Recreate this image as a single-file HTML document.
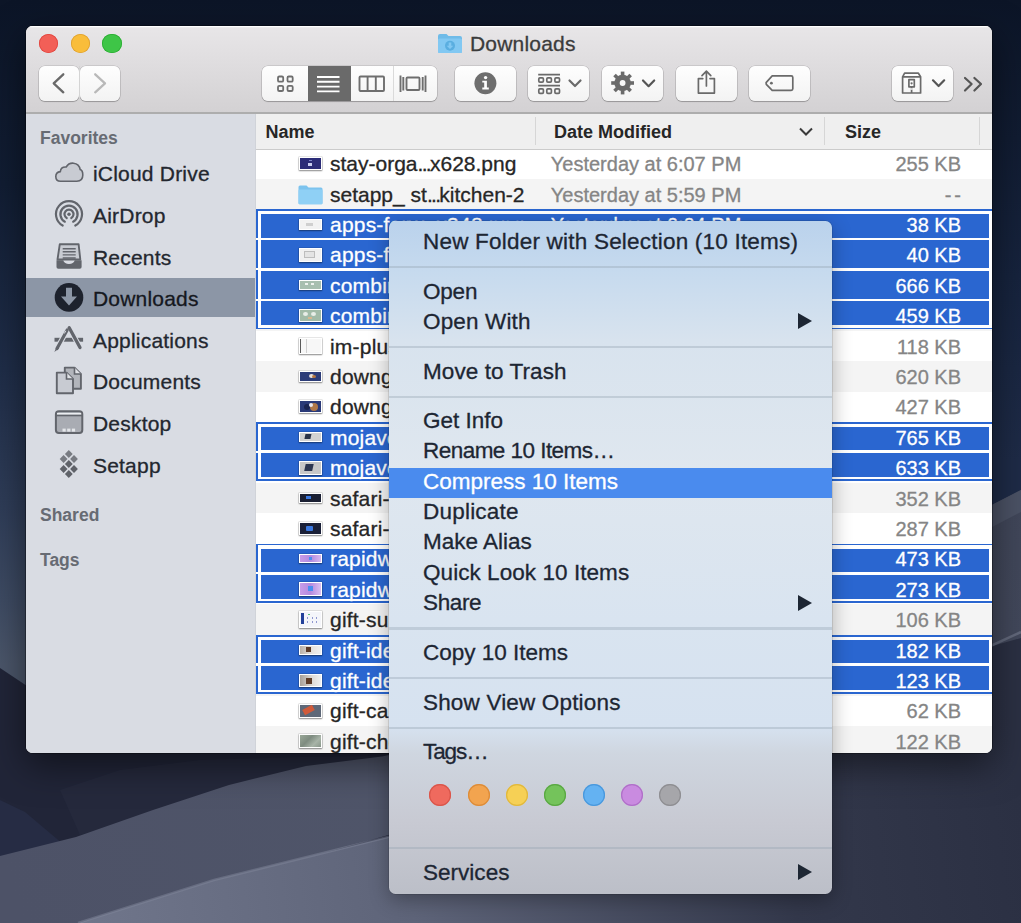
<!DOCTYPE html>
<html><head><meta charset="utf-8"><title>Finder</title>
<style>
*{box-sizing:border-box}
html,body{margin:0;padding:0}
body{width:1021px;height:923px;overflow:hidden;position:relative;background:#131b2d;font-family:"Liberation Sans",sans-serif;-webkit-text-stroke:0.3px currentColor}
.abs{position:absolute}
.t{position:absolute;white-space:nowrap;line-height:1}
.btn{position:absolute;top:66px;height:35px;border-radius:6px;background:linear-gradient(#fefefe,#f3f3f3);box-shadow:0 0 0 0.6px rgba(0,0,0,.18),0 1px 1px rgba(0,0,0,.22)}
.sb{position:absolute;left:93px;font-size:21px;letter-spacing:0.2px;color:#23272f;white-space:nowrap;line-height:1}
.sh{position:absolute;left:40px;font-size:17.5px;font-weight:bold;color:#676b73;-webkit-text-stroke:0;white-space:nowrap;line-height:1}
.nm{position:absolute;left:330px;font-size:21px;letter-spacing:0.2px;color:#262626;white-space:nowrap;line-height:1}
.dt{position:absolute;left:550.8px;font-size:20px;color:#858585;white-space:nowrap;line-height:1}
.sz{position:absolute;right:60px;font-size:20px;color:#858585;white-space:nowrap;line-height:1;text-align:right}
.sel .nm,.sel .dt,.sel .sz{color:#fff}
.mi{position:absolute;left:423px;font-size:22.5px;color:#1d2633;white-space:nowrap;line-height:1}
.sep{position:absolute;left:389px;width:443px;height:2.2px;background:rgba(150,165,180,.38)}
.arr{position:absolute;left:798px;width:0;height:0;border-top:8px solid transparent;border-bottom:8px solid transparent;border-left:14px solid #1d2633}
.tag{position:absolute;top:784px;width:22px;height:22px;border-radius:50%}
</style></head><body>

<svg class="abs" style="left:0;top:0" width="1021" height="923" viewBox="0 0 1021 923">
<defs>
<linearGradient id="sky" x1="0" y1="0" x2="0" y2="923" gradientUnits="userSpaceOnUse"><stop offset="0" stop-color="#0c1527"/><stop offset="0.2" stop-color="#111d33"/><stop offset="0.4" stop-color="#1f2d48"/><stop offset="0.55" stop-color="#2f3d58"/><stop offset="0.65" stop-color="#3e4b63"/><stop offset="0.72" stop-color="#4b566a"/><stop offset="1" stop-color="#4b566a"/></linearGradient>
<linearGradient id="d1" x1="0" y1="857" x2="1021" y2="470" gradientUnits="userSpaceOnUse"><stop offset="0" stop-color="#4d5267"/><stop offset="0.5" stop-color="#50566a"/><stop offset="1" stop-color="#404659"/></linearGradient>
<linearGradient id="d2" x1="80" y1="923" x2="1021" y2="800" gradientUnits="userSpaceOnUse"><stop offset="0" stop-color="#70768b"/><stop offset="0.35" stop-color="#5e6479"/><stop offset="0.75" stop-color="#33384b"/><stop offset="1" stop-color="#2b3043"/></linearGradient>
<linearGradient id="rs" x1="0" y1="0" x2="0" y2="923" gradientUnits="userSpaceOnUse"><stop offset="0" stop-color="#0c1527"/><stop offset="0.3" stop-color="#16233d"/><stop offset="0.5" stop-color="#1e2b47"/><stop offset="1" stop-color="#1e2b47"/></linearGradient>
</defs>
<rect width="1021" height="923" fill="url(#sky)"/>
<rect x="60" width="961" height="923" fill="url(#rs)"/>
<path d="M0 668 L30 688 L90 710 L200 735 L320 748 L450 740 L600 720 L800 700 L1021 680 L1021 923 L0 923 Z" fill="#212538"/>
<path d="M0 800 L25 812 L70 850 L0 872 Z" fill="#262c44"/><path d="M60 790 L120 770 L200 760 L300 757 L389 756 L389 765 L250 790 L150 815 L80 835 Z" fill="#2b2f42" opacity="0.45"/>
<path d="M0 856 L76 837 L153 810 L229 785 L306 766 L382 756.5 L450 742 L550 705 L700 640 L850 578 L1021 490 L1021 640 L700 740 L392 834 L78 923 L0 923 Z" fill="url(#d1)"/>
<path d="M78 923 L214 880 L392 836 L600 770 L800 700 L1021 638 L1021 923 Z" fill="url(#d2)"/>
<path d="M78 923 L214 880 L392 836 L600 770" fill="none" stroke="#80869a" stroke-width="2.5" opacity="0.5"/>
<path d="M900 552 L1021 490 L1021 512 L900 575 Z" fill="#4b5265"/><path d="M960 660 L1021 632" stroke="#6a7083" stroke-width="2.5" opacity="0.8"/>
</svg>

<div class="abs" style="left:26px;top:26px;width:966px;height:727px;border-radius:6.5px;box-shadow:0 12px 36px rgba(0,0,0,.5),0 0 0 0.6px rgba(0,0,0,.55)"></div>
<div class="abs" style="left:26px;top:26px;width:966px;height:727px;border-radius:6.5px;overflow:hidden;background:#fff"><div class="abs" style="left:-26px;top:-26px;width:1021px;height:923px">
<div class="abs" style="left:26px;top:26px;width:966px;height:87px;background:linear-gradient(#e8e6e8,#d3d1d3);box-shadow:inset 0 1.2px 0 rgba(255,255,255,.95)"></div>
<div class="abs" style="left:26px;top:113px;width:230px;height:640px;background:#d9dce3"></div>
<div class="abs" style="left:254.5px;top:113px;width:1.5px;height:640px;background:#d0d3d9"></div>
<div class="abs" style="left:38.7px;top:33.6px;width:19.2px;height:19.2px;border-radius:50%;background:#f25f57;box-shadow:inset 0 0 0 0.8px #e0443e"></div>
<div class="abs" style="left:70.7px;top:33.6px;width:19.2px;height:19.2px;border-radius:50%;background:#f9bd3a;box-shadow:inset 0 0 0 0.8px #dea030"></div>
<div class="abs" style="left:102.4px;top:33.6px;width:19.2px;height:19.2px;border-radius:50%;background:#3ec547;box-shadow:inset 0 0 0 0.8px #2aac32"></div>
<svg class="abs" style="left:437px;top:33px" width="26" height="21" viewBox="0 0 26 21"><path d="M1 3 Q1 1 3 1 H9.5 L11.5 3 H23 Q25 3 25 5 V18.5 Q25 20 23.5 20 H2.5 Q1 20 1 18.5 Z" fill="#6fbbe8"/><rect x="1" y="5.5" width="24" height="14.5" rx="1.5" fill="#82c8f2"/><circle cx="13" cy="12.7" r="5" fill="#5aaee0"/><path d="M11.7 9.5 h2.6 v3.3 h2 l-3.3 3.3 l-3.3 -3.3 h2 z" fill="#82c8f2"/></svg>
<div class="t" style="left:470px;top:33px;font-size:21px;letter-spacing:0.2px;color:#3b3b3b">Downloads</div>
<div class="btn" style="left:39px;width:40px"></div>
<div class="btn" style="left:80px;width:40px"></div>
<svg class="abs" style="left:39px;top:66px" width="81" height="35"><path d="M24.3 8.3 L14.7 17.3 L24.3 26.3" fill="none" stroke="#6a6a6a" stroke-width="2.3" stroke-linecap="round" stroke-linejoin="round"/><path d="M56.2 8.3 L66 17.3 L56.2 26.3" fill="none" stroke="#b9b9b9" stroke-width="2.3" stroke-linecap="round" stroke-linejoin="round"/></svg>
<div class="abs" style="left:79px;top:66px;width:1px;height:35px;background:#d4d4d4"></div>
<div class="btn" style="left:262px;width:175px"></div>
<div class="abs" style="left:307.5px;top:66px;width:43px;height:35px;background:#6a6a6a"></div>
<div class="abs" style="left:392.5px;top:66px;width:1px;height:35px;background:#dadada"></div>
<svg class="abs" style="left:262px;top:66px" width="175" height="35" viewBox="0 0 175 35">
<g fill="none" stroke="#6e6e6e" stroke-width="1.8">
<rect x="16" y="10.5" width="5.2" height="5.2" rx="1.3"/><rect x="25.5" y="10.5" width="5.2" height="5.2" rx="1.3"/>
<rect x="16" y="19.8" width="5.2" height="5.2" rx="1.3"/><rect x="25.5" y="19.8" width="5.2" height="5.2" rx="1.3"/>
</g>
<g stroke="#fff" stroke-width="1.9"><path d="M55 11 H77.5 M55 15.8 H77.5 M55 20.6 H77.5 M55 25.4 H77.5"/></g>
<g fill="none" stroke="#6e6e6e" stroke-width="1.9"><rect x="97.5" y="10.5" width="24.5" height="14.5" rx="1"/><path d="M105.6 10.5 V25 M113.8 10.5 V25"/></g>
<g fill="none" stroke="#6e6e6e" stroke-width="1.9"><rect x="144.5" y="11.5" width="13" height="12.5" rx="1"/><path d="M138.5 9.5 V26 M141.3 11 V24.5 M160.7 11 V24.5 M163.5 9.5 V26"/></g>
</svg>
<div class="btn" style="left:454.5px;width:61px"></div>
<svg class="abs" style="left:454.5px;top:66px" width="61" height="35"><circle cx="30.4" cy="17.2" r="11" fill="#6e6e6e"/><circle cx="30.6" cy="11.6" r="1.7" fill="#fff"/><path d="M27.3 14.8 H31.9 V21.6 H33.8 V23.4 H27.3 V21.6 H29.2 V16.6 H27.3 Z" fill="#fff"/></svg>
<div class="btn" style="left:528px;width:61px"></div>
<svg class="abs" style="left:528px;top:66px" width="61" height="35"><g fill="none" stroke="#6a6a6a"><path d="M10.2 8.6 H32 M10.2 19.6 H32" stroke-width="1.7"/>
<rect x="10.8" y="11.8" width="4.6" height="4.4" rx="1.1" stroke-width="1.7"/><rect x="18.8" y="11.8" width="4.6" height="4.4" rx="1.1" stroke-width="1.7"/><rect x="26.9" y="11.8" width="4.6" height="4.4" rx="1.1" stroke-width="1.7"/>
<rect x="10.8" y="22.9" width="4.6" height="4.4" rx="1.1" stroke-width="1.7"/><rect x="18.8" y="22.9" width="4.6" height="4.4" rx="1.1" stroke-width="1.7"/><rect x="26.9" y="22.9" width="4.6" height="4.4" rx="1.1" stroke-width="1.7"/>
<path d="M41.5 14.5 L47 20 L52.5 14.5" stroke-width="2.2" stroke-linecap="round" stroke-linejoin="round"/></g></svg>
<div class="btn" style="left:602px;width:61px"></div>
<svg class="abs" style="left:602px;top:66px" width="61" height="35"><g fill="#6a6a6a"><circle cx="20.6" cy="17" r="8.3"/><rect x="18.8" y="5.6" width="3.6" height="6" transform="rotate(0 20.6 17)"/><rect x="18.8" y="5.6" width="3.6" height="6" transform="rotate(45 20.6 17)"/><rect x="18.8" y="5.6" width="3.6" height="6" transform="rotate(90 20.6 17)"/><rect x="18.8" y="5.6" width="3.6" height="6" transform="rotate(135 20.6 17)"/><rect x="18.8" y="5.6" width="3.6" height="6" transform="rotate(180 20.6 17)"/><rect x="18.8" y="5.6" width="3.6" height="6" transform="rotate(225 20.6 17)"/><rect x="18.8" y="5.6" width="3.6" height="6" transform="rotate(270 20.6 17)"/><rect x="18.8" y="5.6" width="3.6" height="6" transform="rotate(315 20.6 17)"/></g><circle cx="20.6" cy="17" r="2.9" fill="#f8f8f8"/><path d="M41 14.5 L46.6 20.2 L52.2 14.5" fill="none" stroke="#555" stroke-width="2.2" stroke-linecap="round" stroke-linejoin="round"/></svg>
<div class="btn" style="left:675.5px;width:61px"></div>
<svg class="abs" style="left:675.5px;top:66px" width="61" height="35"><g fill="none" stroke="#6a6a6a" stroke-width="1.7" stroke-linejoin="round" stroke-linecap="round"><path d="M26.8 12.6 H22.4 V27.1 H38.4 V12.6 H34"/><path d="M30.4 20 V5.2 M26 9.6 L30.4 5.2 L34.8 9.6"/></g></svg>
<div class="btn" style="left:749px;width:61px"></div>
<svg class="abs" style="left:749px;top:66px" width="61" height="35"><path d="M17.2 17.6 Q16.8 16.9 17.3 16.3 L23.2 9.9 H42.2 Q43.8 9.9 43.8 11.5 V22.8 Q43.8 24.4 42.2 24.4 H23.2 L17.3 18.3 Z" fill="none" stroke="#6a6a6a" stroke-width="1.7" stroke-linejoin="round"/><circle cx="22.4" cy="17.2" r="1.4" fill="#6a6a6a"/></svg>
<div class="btn" style="left:891.5px;width:61px"></div>
<svg class="abs" style="left:891.5px;top:66px" width="61" height="35"><g fill="none" stroke="#6a6a6a" stroke-width="1.7" stroke-linejoin="round"><path d="M10.6 10.8 L12.6 7.2 H26.4 L28.6 10.8 V27 H10.6 Z M10.6 10.8 H28.6"/><rect x="16.9" y="13.6" width="5.4" height="7.2"/><path d="M19.6 21 V27"/></g><circle cx="19.6" cy="17.3" r="1.1" fill="#6a6a6a"/><path d="M18.4 23 H20.8" stroke="#f4f4f4" stroke-width="1.4"/><path d="M41 14.3 L46.6 20 L52.2 14.3" fill="none" stroke="#555" stroke-width="2.2" stroke-linecap="round" stroke-linejoin="round"/></svg>
<svg class="abs" style="left:962px;top:74px" width="22" height="20"><g fill="none" stroke="#555" stroke-width="2.2" stroke-linecap="round" stroke-linejoin="round"><path d="M3 4 L9.6 10 L3 16.5 M12.4 4 L19 10 L12.4 16.5"/></g></svg>
<div class="sh" style="top:129.6px">Favorites</div>
<div class="abs" style="left:26px;top:278.2px;width:228.8px;height:38.4px;background:#8c96a6"></div>
<div class="sb" style="top:163.4px;">iCloud Drive</div>
<div class="sb" style="top:205.0px;">AirDrop</div>
<div class="sb" style="top:246.6px;">Recents</div>
<div class="sb" style="top:288.2px;color:#15181e">Downloads</div>
<div class="sb" style="top:329.8px;">Applications</div>
<div class="sb" style="top:371.4px;">Documents</div>
<div class="sb" style="top:413.0px;">Desktop</div>
<div class="sb" style="top:454.6px;">Setapp</div>
<div class="sh" style="top:507.2px">Shared</div>
<div class="sh" style="top:552.3px">Tags</div>
<svg class="abs" style="left:0;top:0" width="256" height="500" viewBox="0 0 256 500">
<path d="M60.5 181.2 Q55.8 181.2 55.8 176.5 Q55.8 172.2 60.3 171.6 Q60.8 166.6 66.2 167 Q68.6 162.8 73.5 163.2 Q79.2 163.7 80.2 169.6 Q82.8 170.5 82.8 175 Q82.8 181.2 76.8 181.2 Z" fill="#c8cbd2" stroke="#62656c" stroke-width="1.6"/>
<path d="M62.70 225.57 A13 13 0 1 1 75.30 225.57 M64.83 221.72 A8.6 8.6 0 1 1 73.17 221.72 M66.68 218.06 A4.5 4.5 0 1 1 71.32 218.06" fill="none" stroke="#62656c" stroke-width="2.2" stroke-linecap="round"/>
<circle cx="69" cy="214.2" r="1.7" fill="#62656c"/>
<path d="M59.8 244.2 H78.6 L80.3 259.5 H57.5 Z" fill="#c8cbd2" stroke="#62656c" stroke-width="1.9" stroke-linejoin="round"/>
<path d="M62.7 248.7 H75.7 M62.7 251.8 H75.7 M62.7 254.9 H75.7 M62.7 258 H75.7" stroke="#62656c" stroke-width="1.4"/>
<path d="M56.5 260.2 H63.2 Q64.5 264 69 264 Q73.5 264 74.8 260.2 H81.6 V267 Q81.6 268.8 79.8 268.8 H58.3 Q56.5 268.8 56.5 267 Z" fill="#62656c"/>
<circle cx="69" cy="297.4" r="14.3" fill="#1d222d"/>
<path d="M66 287.8 H72 V296.5 H77 L69 305.5 L61 296.5 H66 Z" fill="#8c96a6"/>
<path d="M54.5 337.8 H83.1 V341.7 H54.5 Z" fill="#62656c"/>
<path d="M67.2 330 L57 348.5 M69.2 327.8 L80 347.5" stroke="#d9dce3" stroke-width="5.4" stroke-linecap="round"/>
<path d="M67.2 330 L57 348.5" stroke="#62656c" stroke-width="3.2" stroke-linecap="round"/>
<path d="M56.6 346.8 L54.3 352 L59.2 348.3 Z" fill="#62656c"/>
<path d="M69.2 327.8 L80 347.5" stroke="#62656c" stroke-width="3.3" stroke-linecap="round"/>
<path d="M64.3 333.5 L65.8 330.8" stroke="#d9dce3" stroke-width="1"/>
<path d="M64.8 367.6 H74.5 L80.9 374 V388.8 H64.8 Z" fill="#b2b5bb" stroke="#62656c" stroke-width="1.9" stroke-linejoin="round"/>
<path d="M74.5 367.6 V374 H80.9" fill="#dfe1e5" stroke="#62656c" stroke-width="1.6"/>
<path d="M56.8 372.6 H66.5 L73 379 V393.2 H56.8 Z" fill="#c8cbd2" stroke="#62656c" stroke-width="1.9" stroke-linejoin="round"/>
<path d="M66.5 372.6 V379 H73" fill="#dfe1e5" stroke="#62656c" stroke-width="1.6"/>
<rect x="55.9" y="411.2" width="26.4" height="21.8" rx="3" fill="#a9acb3" stroke="#62656c" stroke-width="2"/>
<path d="M57 413.6 H81.2" stroke="#eceef1" stroke-width="1.5"/>
<path d="M56 415.6 H82.2" stroke="#62656c" stroke-width="1.4"/>
<rect x="62.5" y="428.6" width="3.2" height="3" fill="#e3e5e9"/><rect x="67.2" y="428.6" width="3.2" height="3" fill="#e3e5e9"/><rect x="71.9" y="428.6" width="3.2" height="3" fill="#e3e5e9"/>
<g fill="#787b82"><path d="M68.8 450.1 L72.7 454 L68.8 457.9 L64.89999999999999 454 Z"/><path d="M63.6 455.1 L67.5 459 L63.6 462.9 L59.7 459 Z"/><path d="M74 455.1 L77.9 459 L74 462.9 L70.1 459 Z"/></g>
<g fill="#5f6269"><path d="M68.8 460.1 L72.7 464 L68.8 467.9 L64.89999999999999 464 Z"/><path d="M63.6 465.1 L67.5 469 L63.6 472.9 L59.7 469 Z"/><path d="M74 465.1 L77.9 469 L74 472.9 L70.1 469 Z"/><path d="M68.8 470.1 L72.7 474 L68.8 477.9 L64.89999999999999 474 Z"/></g>
</svg>
<div class="abs" style="left:256px;top:113px;width:736px;height:37.1px;background:#efefef;border-bottom:1.3px solid #cbcbcb"></div>
<div class="abs" style="left:26px;top:112px;width:966px;height:1.7px;background:#adadad"></div>
<div class="abs" style="left:534.8px;top:117px;width:1px;height:28px;background:#d6d6d6"></div>
<div class="abs" style="left:824.4px;top:117px;width:1px;height:28px;background:#d6d6d6"></div>
<div class="abs" style="left:979.3px;top:117px;width:1px;height:28px;background:#d6d6d6"></div>
<div class="t" style="left:265.5px;top:122.6px;font-size:18px;font-weight:bold;color:#262626;-webkit-text-stroke:0">Name</div>
<div class="t" style="left:554px;top:122.6px;font-size:18px;font-weight:bold;color:#262626;-webkit-text-stroke:0">Date Modified</div>
<div class="t" style="left:845px;top:122.6px;font-size:18px;font-weight:bold;color:#262626;-webkit-text-stroke:0">Size</div>
<svg class="abs" style="left:798px;top:126px" width="16" height="12"><path d="M2 2.5 L8 8.5 L14 2.5" fill="none" stroke="#3a3a3a" stroke-width="2"/></svg>
<div class="abs" style="left:256px;top:150.1px;width:736px;height:29.2px;background:#ffffff"></div>
<div class="abs" style="left:256px;top:178.8px;width:736px;height:30.9px;background:#f4f4f4"></div>
<div class="abs" style="left:256px;top:209.2px;width:736px;height:30.9px;background:#ffffff"></div>
<div class="abs" style="left:256px;top:239.6px;width:736px;height:30.9px;background:#f4f4f4"></div>
<div class="abs" style="left:256px;top:270.0px;width:736px;height:30.9px;background:#ffffff"></div>
<div class="abs" style="left:256px;top:300.4px;width:736px;height:30.9px;background:#f4f4f4"></div>
<div class="abs" style="left:256px;top:330.8px;width:736px;height:30.9px;background:#ffffff"></div>
<div class="abs" style="left:256px;top:361.2px;width:736px;height:30.9px;background:#f4f4f4"></div>
<div class="abs" style="left:256px;top:391.6px;width:736px;height:30.9px;background:#ffffff"></div>
<div class="abs" style="left:256px;top:422.0px;width:736px;height:30.9px;background:#f4f4f4"></div>
<div class="abs" style="left:256px;top:452.4px;width:736px;height:30.9px;background:#ffffff"></div>
<div class="abs" style="left:256px;top:482.8px;width:736px;height:30.9px;background:#f4f4f4"></div>
<div class="abs" style="left:256px;top:513.2px;width:736px;height:30.9px;background:#ffffff"></div>
<div class="abs" style="left:256px;top:543.6px;width:736px;height:30.9px;background:#f4f4f4"></div>
<div class="abs" style="left:256px;top:574.0px;width:736px;height:30.9px;background:#ffffff"></div>
<div class="abs" style="left:256px;top:604.4px;width:736px;height:30.9px;background:#f4f4f4"></div>
<div class="abs" style="left:256px;top:634.8px;width:736px;height:30.9px;background:#ffffff"></div>
<div class="abs" style="left:256px;top:665.2px;width:736px;height:30.9px;background:#f4f4f4"></div>
<div class="abs" style="left:256px;top:695.6px;width:736px;height:30.9px;background:#ffffff"></div>
<div class="abs" style="left:256px;top:726.0px;width:736px;height:30.9px;background:#f4f4f4"></div>
<div class="abs" style="left:256px;top:209.2px;width:736px;height:120.1px;background:#2a66d0"></div>
<div class="abs" style="left:258px;top:211.0px;width:734px;height:116.5px;background:#fff"></div>
<div class="abs" style="left:261px;top:214.4px;width:728px;height:23.3px;background:#2a66d0"></div>
<div class="abs" style="left:261px;top:240.1px;width:728px;height:28.0px;background:#2a66d0"></div>
<div class="abs" style="left:256px;top:237.7px;width:6px;height:2.4px;background:#fff"></div>
<div class="abs" style="left:261px;top:270.5px;width:728px;height:28.0px;background:#2a66d0"></div>
<div class="abs" style="left:256px;top:268.1px;width:6px;height:2.4px;background:#fff"></div>
<div class="abs" style="left:261px;top:300.9px;width:728px;height:24.0px;background:#2a66d0"></div>
<div class="abs" style="left:256px;top:298.5px;width:6px;height:2.4px;background:#fff"></div>
<div class="abs" style="left:256px;top:422.0px;width:736px;height:59.3px;background:#2a66d0"></div>
<div class="abs" style="left:258px;top:423.8px;width:734px;height:55.7px;background:#fff"></div>
<div class="abs" style="left:261px;top:427.2px;width:728px;height:23.3px;background:#2a66d0"></div>
<div class="abs" style="left:261px;top:452.9px;width:728px;height:24.0px;background:#2a66d0"></div>
<div class="abs" style="left:256px;top:450.5px;width:6px;height:2.4px;background:#fff"></div>
<div class="abs" style="left:256px;top:543.6px;width:736px;height:59.3px;background:#2a66d0"></div>
<div class="abs" style="left:258px;top:545.4px;width:734px;height:55.7px;background:#fff"></div>
<div class="abs" style="left:261px;top:548.8px;width:728px;height:23.3px;background:#2a66d0"></div>
<div class="abs" style="left:261px;top:574.5px;width:728px;height:24.0px;background:#2a66d0"></div>
<div class="abs" style="left:256px;top:572.1px;width:6px;height:2.4px;background:#fff"></div>
<div class="abs" style="left:256px;top:634.8px;width:736px;height:59.3px;background:#2a66d0"></div>
<div class="abs" style="left:258px;top:636.6px;width:734px;height:55.7px;background:#fff"></div>
<div class="abs" style="left:261px;top:640.0px;width:728px;height:23.3px;background:#2a66d0"></div>
<div class="abs" style="left:261px;top:665.7px;width:728px;height:24.0px;background:#2a66d0"></div>
<div class="abs" style="left:256px;top:663.3px;width:6px;height:2.4px;background:#fff"></div>
<div style="position:absolute;left:298.5px;top:156.8px;width:23px;height:13.7px;border:1.5px solid #fff;background:#2b2c78;box-shadow:0 0 0 0.5px rgba(0,0,0,.18),0 1px 1.5px rgba(0,0,0,.4);overflow:hidden"><div style="position:absolute;left:8px;top:5.5px;width:4.5px;height:2.6px;background:#c8cdf0"></div><div style="position:absolute;left:9px;top:2.5px;width:3px;height:1px;background:#7c84c8"></div></div>
<div class="nm" style="top:153.2px;letter-spacing:0;">stay-orga<span style="letter-spacing:-1.7px">...</span>x628.png</div>
<div class="dt" style="top:154.2px;">Yesterday at 6:07 PM</div>
<div class="sz" style="top:154.2px;right:60px;">255 KB</div>
<svg style="position:absolute;left:298px;top:184.5px" width="25" height="20" viewBox="0 0 25 20"><path d="M0.5 2 Q0.5 0.5 2 0.5 H8.5 L10.5 2.5 H23 Q24.5 2.5 24.5 4 V18 Q24.5 19.2 23.3 19.2 H1.7 Q0.5 19.2 0.5 18 Z" fill="#7cc3ee"/><rect x="0.5" y="4.6" width="24" height="14.6" rx="1.2" fill="#8fd0f5"/></svg>
<div class="nm" style="top:183.6px;letter-spacing:0;">setapp_ st<span style="letter-spacing:-1.7px">...</span>kitchen-2</div>
<div class="dt" style="top:184.6px;">Yesterday at 5:59 PM</div>
<div class="sz" style="top:184.6px;right:60px;letter-spacing:3px;margin-right:-3px">--</div>
<div style="position:absolute;left:298.5px;top:219.0px;width:23px;height:10.8px;border:1.5px solid #fff;background:#f2f2f2;box-shadow:0 0 0 0.5px rgba(0,0,0,.18),0 1px 1.5px rgba(0,0,0,.4);overflow:hidden"><div style="position:absolute;left:6.5px;top:2.5px;width:7px;height:3.5px;background:#cfcfcf"></div></div>
<div class="nm" style="top:214.0px;color:#fff;">apps-forw<span style="letter-spacing:-1.7px">...</span>x348.png</div>
<div class="dt" style="top:215.0px;color:#fff">Yesterday at 6:04 PM</div>
<div class="sz" style="top:215.0px;right:60px;color:#fff">38 KB</div>
<div style="position:absolute;left:298.5px;top:247.8px;width:23px;height:14.0px;border:1.5px solid #fff;background:#f0f0f0;box-shadow:0 0 0 0.5px rgba(0,0,0,.18),0 1px 1.5px rgba(0,0,0,.4);overflow:hidden"><div style="position:absolute;left:4.5px;top:2px;width:11px;height:7px;border:1px solid #bdbdbd;background:#e4e4e4"></div></div>
<div class="nm" style="top:244.4px;color:#fff;">apps-fo<span style="letter-spacing:-1.7px">...</span>x348.png</div>
<div class="dt" style="top:245.4px;color:#fff">Yesterday at 6:04 PM</div>
<div class="sz" style="top:245.4px;right:60px;color:#fff">40 KB</div>
<div style="position:absolute;left:298.5px;top:279.9px;width:23px;height:10.5px;border:1.5px solid #fff;background:#a8bfb0;box-shadow:0 0 0 0.5px rgba(0,0,0,.18),0 1px 1.5px rgba(0,0,0,.4);overflow:hidden"><div style="position:absolute;left:5px;top:2.5px;width:3px;height:2px;background:#eef2ee"></div><div style="position:absolute;left:11px;top:2.5px;width:3px;height:2px;background:#eef2ee"></div></div>
<div class="nm" style="top:274.8px;color:#fff;">combined<span style="letter-spacing:-1.7px">...</span>x628.png</div>
<div class="dt" style="top:275.8px;color:#fff">Yesterday at 6:01 PM</div>
<div class="sz" style="top:275.8px;right:60px;color:#fff">666 KB</div>
<div style="position:absolute;left:298.5px;top:309.1px;width:23px;height:12.9px;border:1.5px solid #fff;background:#a2bba8;box-shadow:0 0 0 0.5px rgba(0,0,0,.18),0 1px 1.5px rgba(0,0,0,.4);overflow:hidden"><div style="position:absolute;left:3px;top:2px;width:5px;height:4px;border-radius:50%;background:#e8eee8"></div><div style="position:absolute;left:11.5px;top:2px;width:5px;height:4px;border-radius:50%;background:#e8eee8"></div><div style="position:absolute;left:8px;top:7px;width:4px;height:2px;background:#d8b890"></div></div>
<div class="nm" style="top:305.2px;color:#fff;">combined<span style="letter-spacing:-1.7px">...</span>x348.png</div>
<div class="dt" style="top:306.2px;color:#fff">Yesterday at 6:01 PM</div>
<div class="sz" style="top:306.2px;right:60px;color:#fff">459 KB</div>
<div style="position:absolute;left:298.5px;top:337.8px;width:23px;height:16.3px;border:1.5px solid #fff;background:#f7f7f7;box-shadow:0 0 0 0.5px rgba(0,0,0,.18),0 1px 1.5px rgba(0,0,0,.4);overflow:hidden"><div style="position:absolute;left:0;top:0;width:1.5px;height:100%;background:#5a5a5a"></div><div style="position:absolute;left:6px;top:0;width:1px;height:100%;background:#d0d0d0"></div></div>
<div class="nm" style="top:335.6px;">im-plus<span style="letter-spacing:-1.7px">...</span>x628.png</div>
<div class="dt" style="top:336.6px;">Yesterday at 5:58 PM</div>
<div class="sz" style="top:336.6px;right:60px;">118 KB</div>
<div style="position:absolute;left:298.5px;top:371.2px;width:23px;height:10.4px;border:1.5px solid #fff;background:#2c3c78;box-shadow:0 0 0 0.5px rgba(0,0,0,.18),0 1px 1.5px rgba(0,0,0,.4);overflow:hidden"><div style="position:absolute;left:9px;top:2px;width:5px;height:4px;border-radius:50%;background:#e8e0d8"></div><div style="position:absolute;left:12px;top:3px;width:4px;height:3px;border-radius:50%;background:#b87840"></div></div>
<div class="nm" style="top:366.0px;">downgrade<span style="letter-spacing:-1.7px">...</span>x348.png</div>
<div class="dt" style="top:367.0px;">Yesterday at 5:57 PM</div>
<div class="sz" style="top:367.0px;right:60px;">620 KB</div>
<div style="position:absolute;left:298.5px;top:400.4px;width:23px;height:12.8px;border:1.5px solid #fff;background:#2a3a78;box-shadow:0 0 0 0.5px rgba(0,0,0,.18),0 1px 1.5px rgba(0,0,0,.4);overflow:hidden"><div style="position:absolute;left:4px;top:3px;width:6px;height:6px;border-radius:50%;background:#1a2450"></div><div style="position:absolute;left:10px;top:1.5px;width:8px;height:8px;border-radius:50%;background:#b07848"></div><div style="position:absolute;left:9px;top:2px;width:4px;height:4px;border-radius:50%;background:#e8e8f0"></div></div>
<div class="nm" style="top:396.4px;">downgrade<span style="letter-spacing:-1.7px">...</span>x628.png</div>
<div class="dt" style="top:397.4px;">Yesterday at 5:57 PM</div>
<div class="sz" style="top:397.4px;right:60px;">427 KB</div>
<div style="position:absolute;left:298.5px;top:431.9px;width:23px;height:10.5px;border:1.5px solid #fff;background:#d2d2d2;box-shadow:0 0 0 0.5px rgba(0,0,0,.18),0 1px 1.5px rgba(0,0,0,.4);overflow:hidden"><div style="position:absolute;left:5px;top:1.5px;width:6px;height:4.5px;background:#2a3348;transform:skewX(-12deg)"></div></div>
<div class="nm" style="top:426.8px;color:#fff;">mojave<span style="letter-spacing:-1.7px">...</span>x348.png</div>
<div class="dt" style="top:427.8px;color:#fff">Yesterday at 5:56 PM</div>
<div class="sz" style="top:427.8px;right:60px;color:#fff">765 KB</div>
<div style="position:absolute;left:298.5px;top:460.6px;width:23px;height:14.0px;border:1.5px solid #fff;background:#c8c8c8;box-shadow:0 0 0 0.5px rgba(0,0,0,.18),0 1px 1.5px rgba(0,0,0,.4);overflow:hidden"><div style="position:absolute;left:5px;top:2px;width:8px;height:6.5px;background:#2c3650;transform:skewX(-12deg)"></div></div>
<div class="nm" style="top:457.2px;color:#fff;">mojave<span style="letter-spacing:-1.7px">...</span>x628.png</div>
<div class="dt" style="top:458.2px;color:#fff">Yesterday at 5:56 PM</div>
<div class="sz" style="top:458.2px;right:60px;color:#fff">633 KB</div>
<div style="position:absolute;left:298.5px;top:493.3px;width:23px;height:9.4px;border:1.5px solid #fff;background:#1a1f33;box-shadow:0 0 0 0.5px rgba(0,0,0,.18),0 1px 1.5px rgba(0,0,0,.4);overflow:hidden"><div style="position:absolute;left:6px;top:2px;width:5px;height:2.5px;background:#3a78e0"></div></div>
<div class="nm" style="top:487.6px;">safari-<span style="letter-spacing:-1.7px">...</span>x348.png</div>
<div class="dt" style="top:488.6px;">Yesterday at 5:55 PM</div>
<div class="sz" style="top:488.6px;right:60px;">352 KB</div>
<div style="position:absolute;left:298.5px;top:522.0px;width:23px;height:12.8px;border:1.5px solid #fff;background:#1a2038;box-shadow:0 0 0 0.5px rgba(0,0,0,.18),0 1px 1.5px rgba(0,0,0,.4);overflow:hidden"><div style="position:absolute;left:6px;top:2.5px;width:7px;height:5px;background:#3a78e0;border-radius:1px"></div></div>
<div class="nm" style="top:518.0px;">safari-<span style="letter-spacing:-1.7px">...</span>x628.png</div>
<div class="dt" style="top:519.0px;">Yesterday at 5:55 PM</div>
<div class="sz" style="top:519.0px;right:60px;">287 KB</div>
<div style="position:absolute;left:298.5px;top:554.2px;width:23px;height:9.3px;border:1.5px solid #fff;background:linear-gradient(90deg,#c79be8,#b08ae0,#d8b8f0);box-shadow:0 0 0 0.5px rgba(0,0,0,.18),0 1px 1.5px rgba(0,0,0,.4);overflow:hidden"><div style="position:absolute;left:9px;top:1.5px;width:3.5px;height:3px;background:#4a8ef0"></div></div>
<div class="nm" style="top:548.4px;color:#fff;">rapidweaver<span style="letter-spacing:-1.7px">...</span>x348.png</div>
<div class="dt" style="top:549.4px;color:#fff">Yesterday at 5:54 PM</div>
<div class="sz" style="top:549.4px;right:60px;color:#fff">473 KB</div>
<div style="position:absolute;left:298.5px;top:582.2px;width:23px;height:14.0px;border:1.5px solid #fff;background:linear-gradient(90deg,#c89ce8,#b48ae0,#dcc0f2);box-shadow:0 0 0 0.5px rgba(0,0,0,.18),0 1px 1.5px rgba(0,0,0,.4);overflow:hidden"><div style="position:absolute;left:8px;top:2.5px;width:5px;height:5px;background:#4a8ef0"></div></div>
<div class="nm" style="top:578.8px;color:#fff;">rapidweaver<span style="letter-spacing:-1.7px">...</span>x628.png</div>
<div class="dt" style="top:579.8px;color:#fff">Yesterday at 5:54 PM</div>
<div class="sz" style="top:579.8px;right:60px;color:#fff">273 KB</div>
<div style="position:absolute;left:298.5px;top:611.4px;width:23px;height:16.4px;border:1.5px solid #fff;background:#f4f5fa;box-shadow:0 0 0 0.5px rgba(0,0,0,.18),0 1px 1.5px rgba(0,0,0,.4);overflow:hidden"><div style="position:absolute;left:1px;top:1px;width:3.5px;height:11px;background:#23409a"></div><div style="position:absolute;left:8px;top:2px;width:2px;height:1px;background:#5ac080"></div><div style="position:absolute;left:7px;top:5px;width:1.5px;height:1.5px;background:#9098d0"></div><div style="position:absolute;left:12px;top:5px;width:1.5px;height:1.5px;background:#9098d0"></div><div style="position:absolute;left:16px;top:5px;width:1.5px;height:1.5px;background:#9098d0"></div><div style="position:absolute;left:7px;top:9px;width:1.5px;height:1.5px;background:#9098d0"></div><div style="position:absolute;left:12px;top:9px;width:1.5px;height:1.5px;background:#9098d0"></div><div style="position:absolute;left:16px;top:9px;width:1.5px;height:1.5px;background:#9098d0"></div></div>
<div class="nm" style="top:609.2px;">gift-subscr<span style="letter-spacing:-1.7px">...</span>x628.png</div>
<div class="dt" style="top:610.2px;">Yesterday at 5:53 PM</div>
<div class="sz" style="top:610.2px;right:60px;">106 KB</div>
<div style="position:absolute;left:298.5px;top:644.8px;width:23px;height:10.5px;border:1.5px solid #fff;background:linear-gradient(90deg,#b8b0a8,#e8e4e0 60%,#f0f0f0);box-shadow:0 0 0 0.5px rgba(0,0,0,.18),0 1px 1.5px rgba(0,0,0,.4);overflow:hidden"><div style="position:absolute;left:6px;top:1.5px;width:5px;height:4.5px;background:#5a3a28"></div></div>
<div class="nm" style="top:639.6px;color:#fff;">gift-ideas<span style="letter-spacing:-1.7px">...</span>x348.png</div>
<div class="dt" style="top:640.6px;color:#fff">Yesterday at 5:52 PM</div>
<div class="sz" style="top:640.6px;right:60px;color:#fff">182 KB</div>
<div style="position:absolute;left:298.5px;top:674.0px;width:23px;height:12.8px;border:1.5px solid #fff;background:linear-gradient(90deg,#a8a098,#e0dcd8 60%,#f0f0f0);box-shadow:0 0 0 0.5px rgba(0,0,0,.18),0 1px 1.5px rgba(0,0,0,.4);overflow:hidden"><div style="position:absolute;left:6px;top:2.5px;width:6px;height:6px;background:#5e3c28"></div></div>
<div class="nm" style="top:670.0px;color:#fff;">gift-ideas<span style="letter-spacing:-1.7px">...</span>x628.png</div>
<div class="dt" style="top:671.0px;color:#fff">Yesterday at 5:52 PM</div>
<div class="sz" style="top:671.0px;right:60px;color:#fff">123 KB</div>
<div style="position:absolute;left:298.5px;top:703.8px;width:23px;height:14.0px;border:1.5px solid #fff;background:#5e6878;box-shadow:0 0 0 0.5px rgba(0,0,0,.18),0 1px 1.5px rgba(0,0,0,.4);overflow:hidden"><div style="position:absolute;left:3px;top:2px;width:11px;height:6px;background:#d05a3a;transform:rotate(-28deg)"></div></div>
<div class="nm" style="top:700.4px;">gift-card<span style="letter-spacing:-1.7px">...</span>x628.png</div>
<div class="dt" style="top:701.4px;">Yesterday at 5:51 PM</div>
<div class="sz" style="top:701.4px;right:60px;">62 KB</div>
<div style="position:absolute;left:298.5px;top:734.2px;width:23px;height:14.0px;border:1.5px solid #fff;background:linear-gradient(135deg,#9aa898,#7e8c80 40%,#a8b4a8 70%,#88968a);box-shadow:0 0 0 0.5px rgba(0,0,0,.18),0 1px 1.5px rgba(0,0,0,.4);overflow:hidden"></div>
<div class="nm" style="top:730.8px;">gift-chec<span style="letter-spacing:-1.7px">...</span>x628.png</div>
<div class="dt" style="top:731.8px;">Yesterday at 5:50 PM</div>
<div class="sz" style="top:731.8px;right:60px;">122 KB</div>
</div></div>
<div class="abs" style="left:389px;top:221.3px;width:443px;height:672.4px;border-radius:6.5px;box-shadow:0 6px 20px rgba(0,0,0,.3),0 0 0 0.5px rgba(0,0,0,.2);background:linear-gradient(#bad2ec 0px,#c6daee 50px,#d8e3ee 120px,#dfe7ef 250px,#d9e4f0 400px,#d6e2f0 505px,#cfd6e0 532px,#c8cad3 600px,#bcbfc8 672px)"></div>
<div class="abs" style="left:389px;top:467.5px;width:443px;height:30.4px;background:#4a8bee"></div>
<div class="mi" style="top:231.3px;letter-spacing:0.21px;">New Folder with Selection (10 Items)</div>
<div class="mi" style="top:281.0px;letter-spacing:-0.2px;">Open</div>
<div class="mi" style="top:310.9px;letter-spacing:0.15px;">Open With</div>
<div class="arr" style="top:313.4px"></div>
<div class="mi" style="top:360.9px;letter-spacing:0.08px;">Move to Trash</div>
<div class="mi" style="top:410.0px;letter-spacing:0px;">Get Info</div>
<div class="mi" style="top:440.3px;letter-spacing:-0.54px;">Rename 10 Items…</div>
<div class="mi" style="top:470.5px;letter-spacing:0px;color:#fff">Compress 10 Items</div>
<div class="mi" style="top:500.8px;letter-spacing:0.22px;">Duplicate</div>
<div class="mi" style="top:531.2px;letter-spacing:0px;">Make Alias</div>
<div class="mi" style="top:561.5px;letter-spacing:0.06px;">Quick Look 10 Items</div>
<div class="mi" style="top:592.0px;letter-spacing:-0.38px;">Share</div>
<div class="arr" style="top:594.5px"></div>
<div class="mi" style="top:642.3px;letter-spacing:0px;">Copy 10 Items</div>
<div class="mi" style="top:691.8px;letter-spacing:0.17px;">Show View Options</div>
<div class="mi" style="top:741.3px;letter-spacing:-1.1px;">Tags…</div>
<div class="mi" style="top:861.5px;letter-spacing:0.02px;">Services</div>
<div class="arr" style="top:864.0px"></div>
<div class="sep" style="top:266.0px"></div>
<div class="sep" style="top:346.0px"></div>
<div class="sep" style="top:395.6px"></div>
<div class="sep" style="top:627.4px"></div>
<div class="sep" style="top:677.2px"></div>
<div class="sep" style="top:726.6px"></div>
<div class="sep" style="top:846.5px"></div>
<div class="tag" style="left:429.3px;background:#ef6a5e;box-shadow:inset 0 0 0 1.2px #d9564b"></div>
<div class="tag" style="left:467.7px;background:#f2a44f;box-shadow:inset 0 0 0 1.2px #dc8c3a"></div>
<div class="tag" style="left:506.0px;background:#f6d055;box-shadow:inset 0 0 0 1.2px #e0b83e"></div>
<div class="tag" style="left:544.4px;background:#74c35b;box-shadow:inset 0 0 0 1.2px #5aa844"></div>
<div class="tag" style="left:582.7px;background:#64b2f2;box-shadow:inset 0 0 0 1.2px #4a98dc"></div>
<div class="tag" style="left:621.0px;background:#c98be0;box-shadow:inset 0 0 0 1.2px #b070c8"></div>
<div class="tag" style="left:659.4px;background:#a6a6aa;box-shadow:inset 0 0 0 1.2px #8e8e92"></div>
</body></html>
